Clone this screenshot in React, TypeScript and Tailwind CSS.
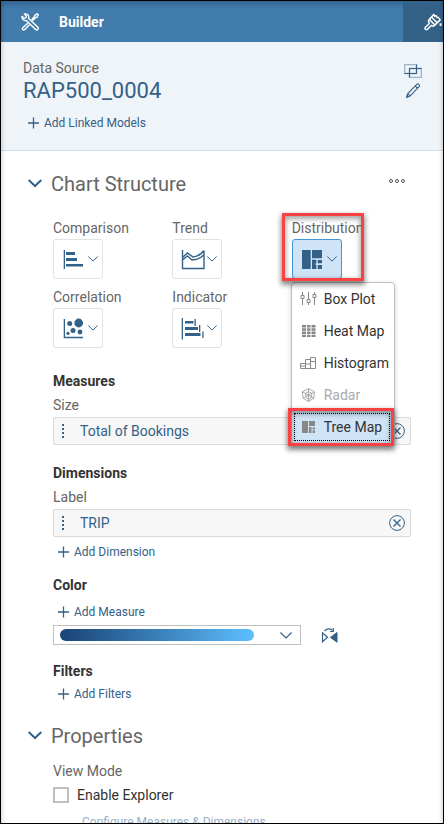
import type { ReactNode } from "react";

function ToolsIcon() {
  return (
    <svg width="18" height="18" viewBox="0 0 18 18" fill="none" stroke="white" strokeWidth="1.400" strokeLinejoin="round" aria-hidden="true">
      <path d="m1 3.400 2.300 1.800L5 4.700l.3-1.700L3.400 1C5.400.500 7.500 1.700 7.700 3.600c.1.700 0 1.200-.2 1.700l9.300 9c.6.700.5 1.600-.1 2.200-.6.600-1.500.5-2.100-.1L5.300 7.500C3.200 8 .700 6.200 1 3.400Z" />
      <path d="m10.600 6.700 3-3.100.2-1.200 2.300-1.600 1.200 1.200-1.500 2.400-1.300.3-3 3M6.800 10.200l-4.800 4.300c-.8.700-.8 1.500-.3 2 .6.600 1.500.5 2.100-.1l4.600-4.600" />
    </svg>
  );
}

function BrushIcon() {
  return (
    <svg width="18" height="18" viewBox="0 0 18 18" fill="none" stroke="white" strokeWidth="1.500" strokeLinejoin="round" aria-hidden="true">
      <path d="m5.300 6.400 5.600 5.600-1.400 1.200-2.300-.8-3.600 3.800c-.7.600-1.600.5-2.100 0-.6-.6-.6-1.400 0-2l3.800-3.700-.9-2.400Z" />
      <path d="M5.400 6.300 9.800 1.400l1 2 1.400-.7.900 1.900 1.200-.2 1.900 2.500-5.200 5M7.600 4.200l5.600 5.600" />
      <path d="M16.600 10.300v2.600" strokeWidth="2" />
    </svg>
  );
}

function LinkModelsIcon() {
  return (
    <svg width="18" height="14" viewBox="0 0 18 14" fill="none" aria-hidden="true">
      <path d="M.500.500h12v9H.500z" stroke="#9db5ca" strokeWidth="1.600" />
      <path d="M5.500 4.500h12v9h-12z" stroke="#9db5ca" strokeWidth="1.600" />
      <path d="M12.500.500v9H.500M5.500 13.500v-9h12" stroke="#346187" />
    </svg>
  );
}

function PencilIcon() {
  return (
    <svg width="14" height="15" viewBox="0 0 14 15" fill="none" stroke="#346187" strokeWidth="1.100" strokeLinejoin="round" aria-hidden="true">
      <path d="M.800 14.200 1.700 10.600 10.800 1.400c.6-.6 1.300-.5 1.800 0l.5.500c.5.600.5 1.200 0 1.800L4.200 12.900ZM1.700 10.600l2.500 2.300M9.300 3l2.500 2.400" />
      <path d="m.800 14.200.4-1.700 1.100 1.100Z" fill="#346187" />
    </svg>
  );
}

function PlusIcon() {
  return (
    <svg width="11" height="12" viewBox="0 0 11 12" stroke="#346187" strokeWidth="1.300" aria-hidden="true">
      <path d="M5.500.500v11M0 6h11" />
    </svg>
  );
}

function SectionChevron() {
  return (
    <svg width="14" height="10" viewBox="0 0 14 10" fill="none" stroke="#346187" strokeWidth="2" aria-hidden="true">
      <path d="m.700 1 6.300 6 6.300-6" />
    </svg>
  );
}

function Chevron({ wide = false }: { wide?: boolean }) {
  return (
    <svg className={wide ? "h-[7px] w-3" : "h-[6px] w-[10px]"} viewBox="0 0 12 7" fill="none" stroke="#346187" strokeWidth="1.200" aria-hidden="true">
      <path d="m.400.500 5.600 5.500L11.600.500" />
    </svg>
  );
}

function GlyphFrame({ children }: { children: ReactNode }) {
  return (
    <svg width="20" height="20" viewBox="0 0 20 20" overflow="visible" fill="#346187" className="shrink-0" aria-hidden="true">
      {children}
    </svg>
  );
}

const comparisonGlyph = (
  <GlyphFrame>
    <path d="M.700 1H2v19H.700zM3 3h9v3H3zM3 9h11v3H3zM3 15h17v2.500H3z" />
  </GlyphFrame>
);

const trendGlyph = (
  <GlyphFrame>
    <path d="M.500 1v18.500h21.500V1.500M.500 8.500 5.500 4l5.500 4 3.500-.8c3-1 5.500-3 7-5.200M.500 11 5.500 7l4.500 4 5-.8c3-1 5-2.500 7-4.500" fill="none" stroke="#346187" strokeWidth="1.400" />
  </GlyphFrame>
);

const correlationGlyph = (
  <GlyphFrame>
    <path d="M.700 1H2v17.800h18v1.400H.700z" />
    <circle cx="6.700" cy="5.500" r="2.500" />
    <circle cx="15.700" cy="5" r="4.400" />
    <circle cx="10" cy="12.600" r="2.500" />
    <circle cx="17" cy="14" r="2.400" />
    <circle cx="5" cy="15.300" r="1.600" />
  </GlyphFrame>
);

const indicatorGlyph = (
  <GlyphFrame>
    <path d="M-.300 0H1v21.500H-.300zM3 3h8.500v2.500H3zM12.500 1h1.300v7h-1.300zM3 9h13v3H3zM17 7h1.300v7H17zM3 15h15.500v3H3zM20.300 13.500h1.300V20h-1.300z" />
  </GlyphFrame>
);

const treeGlyph = (
  <GlyphFrame>
    <path d="M0 1h8.700v19H0zM10 1h10v8.300H10zM10 10.700h4.400v3.600h-.8v1.700h.8v4H10zM15.800 11h4.200v3.300h-4.200zM15.800 16h4.200v4h-4.200z" />
  </GlyphFrame>
);

const menuIcons = {
  box: (
    <path d="M2.500 1v3M2.500 8v6M1 4.500h3v3H1zM8.500 1v8M8.500 12v2M7 8.500h3v3H7zM14.500 1v2M14.500 7v7M13 3.500h3v3h-3z" fill="none" stroke="#888" />
  ),
  heat: (
    <path d="M2 2h4v2.500H2zM7 2h3.500v2.500H7zM11.500 2h4v2.500h-4zM2 5.300h4v2.400H2zM7 5.300h3.500v2.400H7zM11.500 5.300h4v2.400h-4zM2 8.500h4v2.400H2zM7 8.500h3.500v2.400H7zM11.500 8.500h4v2.400h-4zM2 11.700h4V14H2zM7 11.700h3.500V14H7zM11.500 11.700h4V14h-4z" fill="#888" />
  ),
  histogram: (
    <path d="M.500 8.500h5v5h-5zM.500 11h5M5.500 4.500h5v9h-5zM5.500 9h5M10.500 2.500h5v11h-5zM10.500 6.500h5" fill="none" stroke="#888" />
  ),
  radar: (
    <path d="m8.500 1.500 6 3.300-.7 6.400-5.300 3.300-5.500-3.300-.7-6.400ZM8.500 1.500v13M2.300 4.800l6.200 3.400 6-3.400M8.500 8.200 3 11.200M8.500 8.200l5.300 3M5.500 6l3-1.500 3.500 2-1 4.500-2.500 1.500L6 10.500Z" fill="none" stroke="#aaa" />
  ),
  tree: (
    <path d="M2 2h6v12H2zM9 2h6v5H9zM9 8h2.500v6H9zM12.500 8.500H15v2h-2.500zM12.500 11.500H15V14h-2.500z" fill="#888" />
  ),
};

const menuItems: { label: string; icon: ReactNode; disabled?: boolean; selected?: boolean }[] = [
  { label: "Box Plot", icon: menuIcons.box },
  { label: "Heat Map", icon: menuIcons.heat },
  { label: "Histogram", icon: menuIcons.histogram },
  { label: "Radar", icon: menuIcons.radar, disabled: true },
  { label: "Tree Map", icon: menuIcons.tree, selected: true },
];

const callout = "pointer-events-none absolute border-3 border-[#fb4141] shadow-[0_3px_5px_1px_rgba(0,0,0,0.45),inset_0_2px_5px_1px_rgba(0,0,0,0.35)]";

function ChartMenu() {
  return (
    <div role="menu" className="absolute top-16 left-0 z-10 -ml-px w-[104px] rounded-[4px] border border-[#bfbfbf] bg-white shadow-[0_2px_5px_rgba(0,0,0,0.2)]">
      {menuItems.map(({ label, icon, disabled, selected }) => (
        <div key={label} className="relative">
          <button
            type="button"
            role="menuitem"
            disabled={disabled}
            className={`flex h-8 w-full items-center gap-2 px-2 text-left whitespace-nowrap ${
              selected ? "bg-[#d0e4f8] text-[#333]" : disabled ? "text-[#aaa]" : "text-[#333]"
            }`}
          >
            <svg width="16" height="16" viewBox="0 0 16 16" overflow="visible" className="shrink-0" aria-hidden="true">
              {icon}
            </svg>
            {label}
          </button>
          {selected && (
            <>
              <span className="pointer-events-none absolute inset-y-0.5 right-1 left-0.5 border border-dotted border-black" />
              <span className={`${callout} -inset-y-[3px] right-0 -left-1`} />
            </>
          )}
        </div>
      ))}
    </div>
  );
}

function ChartType({ label, glyph, active = false }: { label: string; glyph: ReactNode; active?: boolean }) {
  return (
    <div className="relative">
      <div>{label}</div>
      <button
        type="button"
        aria-label={label}
        aria-haspopup="menu"
        aria-expanded={active}
        className={`mt-px flex h-10 w-[50px] items-center gap-[5px] rounded-[3px] border pl-[9px] ${
          active ? "border-[#3c96d8] bg-[#d0e4f8]" : "border-[#e2e2e2] bg-white"
        }`}
      >
        {glyph}
        <Chevron />
      </button>
      {active && (
        <>
          <ChartMenu />
          <span className={`${callout} -top-[5px] -left-[10px] z-20 h-[68px] w-[82px]`} />
        </>
      )}
    </div>
  );
}

function Token({ name }: { name: string }) {
  return (
    <div className="mt-0.5 flex h-7 items-center rounded-[2px] border border-[#d9d9d9] bg-[#f7f7f7] pr-[5px] pl-2 text-[#346187]">
      <svg width="3" height="14" viewBox="0 0 3 14" fill="#346187" aria-hidden="true">
        <path d="M0 0h2v2H0zM0 4h2v2H0zM0 8h2v2H0zM0 12h2v2H0z" />
      </svg>
      <span className="ml-[15px] flex-1">{name}</span>
      <button type="button" aria-label={`Remove ${name}`}>
        <svg width="16" height="16" viewBox="0 0 16 16" fill="none" stroke="#346187" className="block" aria-hidden="true">
          <circle cx="8" cy="8" r="7.400" />
          <path d="m4.500 4.500 7 7M11.500 4.500l-7 7" strokeWidth="1.300" />
        </svg>
      </button>
    </div>
  );
}

function AddLink({ children }: { children: ReactNode }) {
  return (
    <button type="button" className="ml-[5px] flex h-4 items-center gap-[5px] text-xs text-[#346187]">
      <PlusIcon />
      {children}
    </button>
  );
}

function SectionTitle({ children }: { children: ReactNode }) {
  return (
    <h2 className="-ml-[25px] flex items-center gap-[9px] text-xl leading-7 text-[#666]">
      <SectionChevron />
      {children}
    </h2>
  );
}

export default function App() {
  return (
    <div className="relative flex h-screen flex-col overflow-hidden border border-black bg-white font-['Roboto','Liberation_Sans',sans-serif] text-sm leading-5 text-[#666]">
      <header className="flex h-[41px] shrink-0 items-center bg-[#427cac] pl-5 text-white shadow-[inset_0_5px_5px_-2px_rgba(40,70,110,0.5)]">
        <ToolsIcon />
        <h1 className="ml-5 flex-1 font-bold">Builder</h1>
        <button type="button" aria-label="Styling" className="flex h-full w-10 items-center justify-end bg-[#346187] pr-px">
          <BrushIcon />
        </button>
      </header>

      <section className="flex h-[109px] shrink-0 justify-between border-b border-[#cfdff0] bg-[#eff4f9] pt-4 pr-[21px] pl-[22px]">
        <div>
          <div>Data Source</div>
          <div className="text-[22px] leading-[26px] text-[#346187]">RAP500_0004</div>
          <div className="mt-[11px]">
            <AddLink>Add Linked Models</AddLink>
          </div>
        </div>
        <div className="flex flex-col items-center gap-[5px] pt-[6px]">
          <button type="button" aria-label="Linked models"><LinkModelsIcon /></button>
          <button type="button" aria-label="Edit data source"><PencilIcon /></button>
        </div>
      </section>

      <main className="min-h-0 flex-1 overflow-hidden pt-[19px] pr-8 pl-[52px]">
        <div className="flex items-start justify-between">
          <SectionTitle>Chart Structure</SectionTitle>
          <button type="button" aria-label="More options" className="mt-2 mr-[5px]">
            <svg width="18" height="6" viewBox="0 0 18 6" fill="none" stroke="#555" className="block" aria-hidden="true">
              <circle cx="3" cy="3" r="1.500" />
              <circle cx="9" cy="3" r="1.500" />
              <circle cx="15" cy="3" r="1.500" />
            </svg>
          </button>
        </div>

        <div className="mt-5 grid grid-cols-3 gap-y-2">
          <ChartType label="Comparison" glyph={comparisonGlyph} />
          <ChartType label="Trend" glyph={trendGlyph} />
          <ChartType label="Distribution" glyph={treeGlyph} active />
          <ChartType label="Correlation" glyph={correlationGlyph} />
          <ChartType label="Indicator" glyph={indicatorGlyph} />
        </div>

        <h3 className="mt-[23px] font-bold text-[#333]">Measures</h3>
        <div className="mt-1">Size</div>
        <Token name="Total of Bookings" />

        <h3 className="mt-[18px] font-bold text-[#333]">Dimensions</h3>
        <div className="mt-1">Label</div>
        <Token name="TRIP" />
        <div className="mt-[7px]"><AddLink>Add Dimension</AddLink></div>

        <h3 className="mt-[15px] font-bold text-[#333]">Color</h3>
        <div className="mt-[9px]"><AddLink>Add Measure</AddLink></div>
        <div className="mt-[5px] flex items-center gap-5">
          <div className="relative flex h-5 w-[248px] items-center justify-between border border-[#bfbfbf] pr-2 pl-[6px]">
            <span className="h-3 w-[194px] rounded-full bg-linear-to-r from-[#1a4476] to-[#5ebfff]" />
            <Chevron wide />
            <select aria-label="Color palette" className="absolute inset-0 w-full appearance-none bg-transparent">
              <option aria-label="Blue gradient" />
            </select>
          </div>
          <button type="button" aria-label="Reverse palette">
            <svg width="17" height="15" viewBox="0 0 17 15" fill="none" stroke="#346187" className="block" aria-hidden="true">
              <path d="M1.500 4.800v9l5-4.500ZM3.500 3c2-2.300 5-2.800 8-.8M12.300 0v3.500H9" strokeWidth="1.200" />
              <path d="M16 4.500v9.700L9.500 9.400Z" fill="#346187" />
            </svg>
          </button>
        </div>

        <h3 className="mt-4 font-bold text-[#333]">Filters</h3>
        <div className="mt-[5px]"><AddLink>Add Filters</AddLink></div>

        <div className="mt-5"><SectionTitle>Properties</SectionTitle></div>
        <div className="mt-[11px]">View Mode</div>
        <label className="mt-1 flex w-fit items-center gap-2 text-[#333]">
          <input type="checkbox" className="size-4 appearance-none border-2 border-[#bfbfbf] bg-white" />
          Enable Explorer
        </label>
        <button type="button" disabled className="mt-[9px] ml-[29px] block h-4 text-xs text-[#9ab0c3]">
          Configure Measures &amp; Dimensions
        </button>
      </main>
      <div className="pointer-events-none absolute inset-0 shadow-[inset_5px_0_4px_-4px_rgba(0,0,0,0.18),inset_-5px_0_4px_-4px_rgba(0,0,0,0.18)]" />
    </div>
  );
}
